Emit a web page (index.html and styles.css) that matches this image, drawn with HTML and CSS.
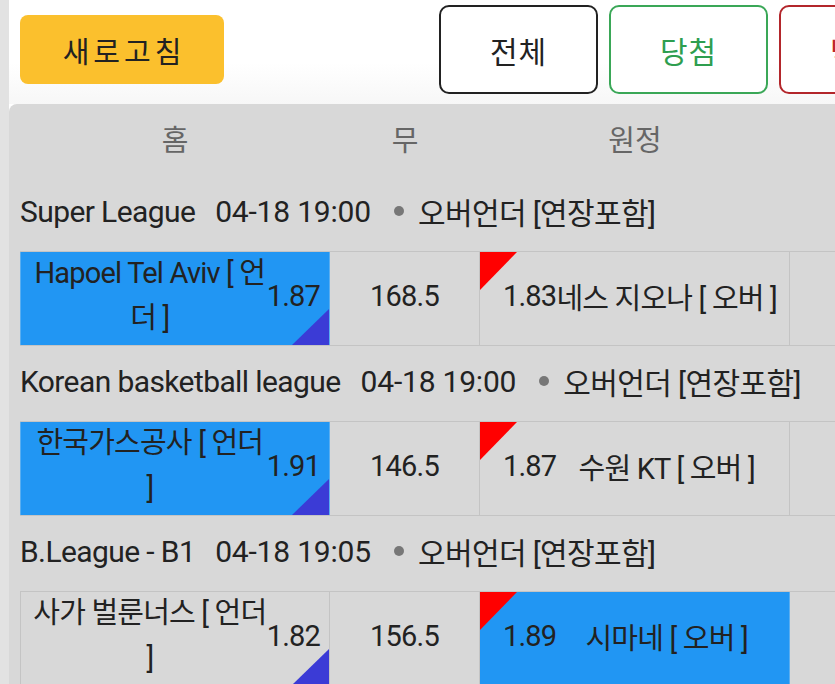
FILE: index.html
```html
<!DOCTYPE html>
<html lang="ko">
<head>
    <meta charset="UTF-8">
    <meta name="viewport" content="width=device-width, initial-scale=1.0">
    <title>오버언더</title>
    <link rel="stylesheet" href="styles.css">
</head>
<body>
    <div class="page">
        <!-- Top bar -->
        <header class="topbar">
            <button class="refresh-btn">새로고침</button>
            <div class="filters">
                <button class="filter filter-all">전체</button>
                <button class="filter filter-win">당첨</button>
                <button class="filter filter-lose">낙첨</button>
            </div>
        </header>

        <!-- Bet list -->
        <section class="panel">
            <div class="head-row">
                <div class="head-cell">홈</div>
                <div class="head-cell">무</div>
                <div class="head-cell">원정</div>
                <div class="head-cell"></div>
            </div>

            <div class="league">
                <span class="league-name">Super League</span>
                <span class="league-time">04-18 19:00</span>
                <span class="dot"></span>
                <span class="league-type">오버언더 [연장포함]</span>
            </div>
            <div class="match">
                <div class="cell home picked down">
                    <span class="team">Hapoel Tel Aviv [ 언더 ]</span>
                    <span class="odds">1.87</span>
                </div>
                <div class="cell mid">168.5</div>
                <div class="cell away up">
                    <span class="odds">1.83</span>
                    <span class="team">네스 지오나 [ 오버 ]</span>
                </div>
                <div class="cell extra"></div>
            </div>

            <div class="league">
                <span class="league-name">Korean basketball league</span>
                <span class="league-time">04-18 19:00</span>
                <span class="dot"></span>
                <span class="league-type">오버언더 [연장포함]</span>
            </div>
            <div class="match">
                <div class="cell home picked down">
                    <span class="team">한국가스공사 [ 언더 ]</span>
                    <span class="odds">1.91</span>
                </div>
                <div class="cell mid">146.5</div>
                <div class="cell away up">
                    <span class="odds">1.87</span>
                    <span class="team">수원 KT [ 오버 ]</span>
                </div>
                <div class="cell extra"></div>
            </div>

            <div class="league">
                <span class="league-name">B.League - B1</span>
                <span class="league-time">04-18 19:05</span>
                <span class="dot"></span>
                <span class="league-type">오버언더 [연장포함]</span>
            </div>
            <div class="match">
                <div class="cell home down">
                    <span class="team">사가 벌룬너스 [ 언더 ]</span>
                    <span class="odds">1.82</span>
                </div>
                <div class="cell mid">156.5</div>
                <div class="cell away picked up">
                    <span class="odds">1.89</span>
                    <span class="team">시마네 [ 오버 ]</span>
                </div>
                <div class="cell extra"></div>
            </div>
        </section>
    </div>
</body>
</html>
```

FILE: styles.css
```css
/* Base */
* {
    margin: 0;
    padding: 0;
    box-sizing: border-box;
}

body {
    font-family: Roboto, "Noto Sans CJK KR", sans-serif;
    background-color: #e2e2e2;
    color: #222;
    width: 835px;
    height: 684px;
    overflow: hidden;
}

.page {
    margin-left: 9px;
    width: 1000px;
    min-height: 684px;
    background-color: #fff;
}

/* Top bar */
.topbar {
    height: 104px;
    display: flex;
    align-items: center;
    padding: 0 0 5px 11px;
    background: linear-gradient(#fff 60%, #f7f7f7);
}

.refresh-btn {
    width: 204px;
    height: 69px;
    border: none;
    border-radius: 8px;
    background-color: #fbc02d;
    color: #222;
    font-family: inherit;
    font-size: 29px;
    letter-spacing: 4px;
    text-indent: 4px;
}

.filters {
    display: flex;
    gap: 11px;
    margin-left: 215px;
}

.filter {
    width: 159px;
    height: 89px;
    background-color: #fff;
    border: 2px solid #222;
    border-radius: 10px;
    font-family: inherit;
    font-size: 30px;
    letter-spacing: 1px;
    color: #222;
}

.filter-win {
    border-color: #3aa757;
    color: #2e9e4f;
}

.filter-lose {
    border-color: #b3262b;
    color: #c0262b;
}

/* Panel */
.panel {
    background-color: #d8d8d8;
    border-top-left-radius: 8px;
    padding-left: 11px;
    min-height: 580px;
}

.head-row {
    height: 72px;
    display: grid;
    grid-template-columns: 310px 150px 310px 160px;
    align-items: center;
    padding-bottom: 4px;
}

.head-cell {
    text-align: center;
    color: #666;
    font-size: 29px;
}

/* League line */
.league {
    height: 75px;
    display: flex;
    align-items: center;
    padding-bottom: 5px;
    font-size: 30px;
    letter-spacing: -0.6px;
    color: #222;
    white-space: nowrap;
}

.league-time {
    margin-left: 20px;
    letter-spacing: -0.2px;
}

.dot {
    width: 10px;
    height: 10px;
    border-radius: 50%;
    background-color: #777;
    margin: 0 14px 0 23px;
}

/* Match row */
.match {
    display: grid;
    grid-template-columns: 310px 150px 310px 160px;
    height: 95px;
    border-top: 1px solid #c4c4c4;
    border-bottom: 1px solid #c4c4c4;
}

.cell {
    position: relative;
    display: flex;
    align-items: center;
    padding-bottom: 5px;
    border-right: 1px solid #c4c4c4;
    font-size: 29px;
    letter-spacing: -0.8px;
    overflow: hidden;
}

.home {
    border-left: 1px solid #c4c4c4;
    padding: 0 9px 5px 12px;
}

.home .team {
    flex: 1;
    text-align: center;
    line-height: 45px;
}

.mid {
    justify-content: center;
}

.away {
    padding: 0 12px 5px 23px;
}

.away .team {
    flex: 1;
    text-align: center;
    white-space: nowrap;
}

.picked {
    background-color: #2196f3;
    border-color: #5aaef0;
}

/* Odds movement markers */
.up::before {
    content: "";
    position: absolute;
    top: 0;
    left: 0;
    width: 37px;
    height: 38px;
    background-color: #ff0000;
    clip-path: polygon(0 0, 100% 0, 0 100%);
}

.down::after {
    content: "";
    position: absolute;
    right: 0;
    bottom: 0;
    width: 37px;
    height: 36px;
    background-color: #3b3bd6;
    clip-path: polygon(100% 0, 100% 100%, 0 100%);
}
```
